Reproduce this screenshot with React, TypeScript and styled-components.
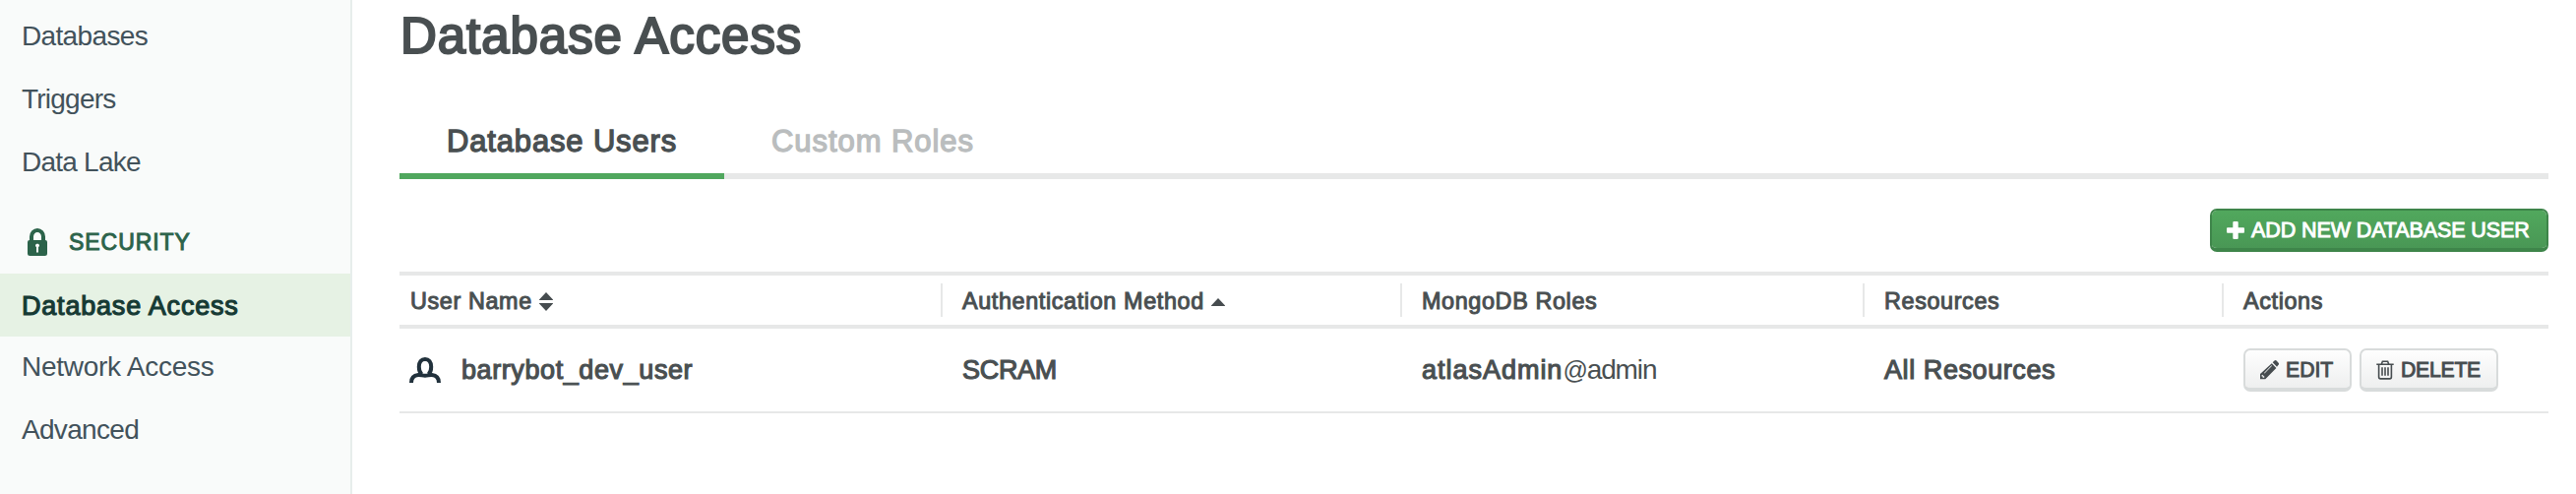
import React from 'react';
import styled, { createGlobalStyle, css } from 'styled-components';

const GlobalStyle = createGlobalStyle`
  * { box-sizing: border-box; }
  body {
    margin: 0;
    background: #fff;
    color: #494f51;
    font-family: "Liberation Sans", Arial, sans-serif;
  }
`;

const medium = css`
  -webkit-text-stroke: 0.043em currentColor;
`;

const Page = styled.div`
  display: flex;
  height: 502px;
  overflow: hidden;
`;

const Sidebar = styled.nav`
  flex: none;
  width: 358px;
  padding-top: 4px;
  background: #f9fbfa;
  border-right: 2px solid #e7eeec;
`;

const NavItem = styled.a<{ $active?: boolean; $track: number; $pull?: boolean }>`
  display: block;
  height: 64px;
  padding: 1px 0 0 22px;
  line-height: 64px;
  font-size: 28px;
  letter-spacing: ${(p) => p.$track}px;
  color: #42525b;
  white-space: nowrap;
  ${(p) => p.$pull && css`margin-top: -2px;`}
  ${(p) =>
    p.$active &&
    css`
      ${medium}
      font-size: 27px;
      color: #163a34;
      background: #e6f2e4;
    `}
`;

const NavHeading = styled.div`
  ${medium}
  display: flex;
  align-items: center;
  height: 82px;
  padding: 18px 0 0 28px;
  gap: 22px;
  font-size: 23px;
  letter-spacing: 0.95px;
  color: #2c634a;
`;

const Main = styled.main`
  flex: 1;
  min-width: 0;
  padding: 7px 28px 0 48px;
`;

const Title = styled.h1`
  ${medium}
  margin: 0 0 43px;
  padding-left: 1px;
  font-size: 51px;
  line-height: 60px;
  font-weight: 400;
  letter-spacing: 0.95px;
`;

const Tabs = styled.div`
  display: flex;
  height: 72px;
  box-shadow: inset 0 -6px #e7e8e8;
`;

const Tab = styled.div<{ $active?: boolean }>`
  ${medium}
  width: ${(p) => (p.$active ? 330 : 300)}px;
  padding: 1px 0 0 48px;
  font-size: 31px;
  line-height: 65px;
  letter-spacing: ${(p) => (p.$active ? 0.84 : 0.93)}px;
  color: ${(p) => (p.$active ? '#494f51' : '#babdbe')};
  border-bottom: 6px solid ${(p) => (p.$active ? '#50a75e' : 'transparent')};
`;

const Toolbar = styled.div`
  display: flex;
  justify-content: flex-end;
  padding: 30px 0 20px;
`;

const Button = styled.button<{ $primary?: boolean; $width: number; $track: number }>`
  ${medium}
  display: flex;
  align-items: center;
  width: ${(p) => p.$width}px;
  height: 44px;
  padding: 2px 0 0 15px;
  gap: 7px;
  font: 400 21.2px "Liberation Sans", Arial, sans-serif;
  letter-spacing: ${(p) => p.$track}px;
  white-space: nowrap;
  color: #464c4f;
  border: 2px solid #d8dbdb;
  border-bottom-width: 4px;
  border-radius: 7px;
  background: linear-gradient(#fefefe, #eeefef) padding-box;
  ${(p) =>
    p.$primary &&
    css`
      font-size: 21.5px;
      color: #fff;
      border-color: #3e854a;
      background: linear-gradient(#51a85d, #499755) padding-box;
    `}
  svg { flex: none; }
`;

const columns = css`
  display: grid;
  grid-template-columns: 550px 467px 470px 365px 1fr;
  align-items: center;
`;

const HeaderRow = styled.div`
  ${columns}
  height: 58px;
  border: solid #e7e8e8;
  border-width: 4px 0;
`;

const HeaderCell = styled.div`
  ${medium}
  display: flex;
  align-items: center;
  height: 34px;
  padding: 2px 0 0 20px;
  font-size: 23.4px;
  letter-spacing: 0.62px;
  white-space: nowrap;
  border-left: 2px solid #e7e8e8;
  &:first-child { padding-left: 11px; border-left: 0; }
  svg { margin-left: 7px; }
`;

const Row = styled.div`
  ${columns}
  height: 86px;
  border-bottom: 2px solid #e7e8e8;
`;

const Cell = styled.div<{ $track?: number }>`
  ${medium}
  display: flex;
  align-items: center;
  padding-left: 22px;
  font-size: 27px;
  letter-spacing: ${(p) => p.$track ?? 0}px;
  white-space: nowrap;
  &:first-child { padding-left: 10px; gap: 21px; }
`;

const Scope = styled.span`
  -webkit-text-stroke: 0;
  display: flex;
  align-items: baseline;
  font-size: 28px;
  letter-spacing: -1.1px;
`;

const At = styled.span`
  font-size: 25px;
`;

const Actions = styled.div`
  display: flex;
  gap: 8px;
  padding-left: 22px;
`;

const LockIcon = () => (
  <svg width="20" height="28" viewBox="0 0 20 28">
    <path d="M4 13V8.500a6 6.500 0 0 1 12 0V13" fill="none" stroke="#2c634a" strokeWidth="4" />
    <path
      fillRule="evenodd"
      fill="#2c634a"
      d="M2 12h16a2 2 0 0 1 2 2v11.500a2.500 2.500 0 0 1-2.500 2.500h-15A2.500 2.500 0 0 1 0 25.500V14a2 2 0 0 1 2-2zM8 17.300c0 1 .5 1.500 1 1.700v5.500h2V19c.5-.2 1-.7 1-1.700 0-1-.9-1.600-2-1.600s-2 .6-2 1.600z"
    />
  </svg>
);

const SortIcon = () => (
  <svg width="14" height="19" viewBox="0 0 14 19" fill="#464c4f">
    <path d="M7 0 14 7.500v.5H0v-.5zM7 19 0 11.500V11h14v.5z" />
  </svg>
);

const SortAscIcon = () => (
  <svg width="14" height="19" viewBox="0 0 14 19" fill="#464c4f">
    <path d="M7 6 14 13.500v.5H0v-.5z" />
  </svg>
);

const UserIcon = () => (
  <svg width="32" height="26" viewBox="0 0 32 26" fill="none" stroke="#21313c" strokeWidth="4">
    <path d="M12.500 17.500C10.500 15.500 9.800 12.600 9.800 9.800 9.800 5 12.200 2 16 2s6.200 3 6.200 7.800c0 2.800-.7 5.700-2.700 7.700" />
    <path d="M2 26c0-5.600 2.500-7.600 7-8 2.500-.2 4.500.8 7 .8s4.500-1 7-.8c4.500.4 7 2.400 7 8" />
  </svg>
);

const PlusIcon = () => (
  <svg width="18" height="18" viewBox="0 0 18 18" fill="#fff">
    <rect y="6.300" width="18" height="5.400" rx="1" />
    <rect x="6.300" width="5.400" height="18" rx="1" />
  </svg>
);

const PencilIcon = () => (
  <svg width="19" height="20" viewBox="0 0 19 20" fill="#464c4f">
    <path d="M11.800 3.200l4.600 4.700L5.300 19.300H0v-5.400zM2.200 14.700l-.7.700v1.200h1.100v1.200h1.300l.7-.7zM11.500 5.200 4 12.900l.5.500L12 5.700z" fillRule="evenodd" />
    <path d="M12.700 2.300 14.500.6a1.500 1.500 0 0 1 2.100 0l2 2.100a1.500 1.500 0 0 1 0 2.100L17 6.700z" />
  </svg>
);

const TrashIcon = () => (
  <svg width="18" height="20" viewBox="0 0 18 20" fill="none" stroke="#464c4f" strokeWidth="1.600">
    <path d="M.3 4.300h17.400M5.300 4 6.400 1.300h5.200L12.700 4M2.600 4.300v12.700c0 1.200.7 1.900 1.700 1.900h9.400c1 0 1.700-.7 1.700-1.900V4.300M6 7.300v8.400M9 7.300v8.400M12 7.300v8.400" />
  </svg>
);

export default function App() {
  return (
    <Page>
      <GlobalStyle />
      <Sidebar>
        <NavItem $track={-0.65}>Databases</NavItem>
        <NavItem $track={-0.77}>Triggers</NavItem>
        <NavItem $track={-0.77}>Data Lake</NavItem>
        <NavHeading>
          <LockIcon />
          SECURITY
        </NavHeading>
        <NavItem $active $track={0.8}>Database Access</NavItem>
        <NavItem $pull $track={-0.27}>Network Access</NavItem>
        <NavItem $track={-0.69}>Advanced</NavItem>
      </Sidebar>
      <Main>
        <Title>Database Access</Title>
        <Tabs>
          <Tab $active>Database Users</Tab>
          <Tab>Custom Roles</Tab>
        </Tabs>
        <Toolbar>
          <Button $primary $width={344} $track={-0.1}>
            <PlusIcon />
            ADD NEW DATABASE USER
          </Button>
        </Toolbar>
        <HeaderRow>
          <HeaderCell>User Name<SortIcon /></HeaderCell>
          <HeaderCell>Authentication Method<SortAscIcon /></HeaderCell>
          <HeaderCell>MongoDB Roles</HeaderCell>
          <HeaderCell>Resources</HeaderCell>
          <HeaderCell>Actions</HeaderCell>
        </HeaderRow>
        <Row>
          <Cell $track={0.59}><UserIcon />barrybot_dev_user</Cell>
          <Cell $track={-0.3}>SCRAM</Cell>
          <Cell $track={0.98}>
            atlasAdmin<Scope><At>@</At>admin</Scope>
          </Cell>
          <Cell $track={0.58}>All Resources</Cell>
          <Actions>
            <Button $width={110} $track={0}><PencilIcon />EDIT</Button>
            <Button $width={141} $track={-0.24}><TrashIcon />DELETE</Button>
          </Actions>
        </Row>
      </Main>
    </Page>
  );
}
